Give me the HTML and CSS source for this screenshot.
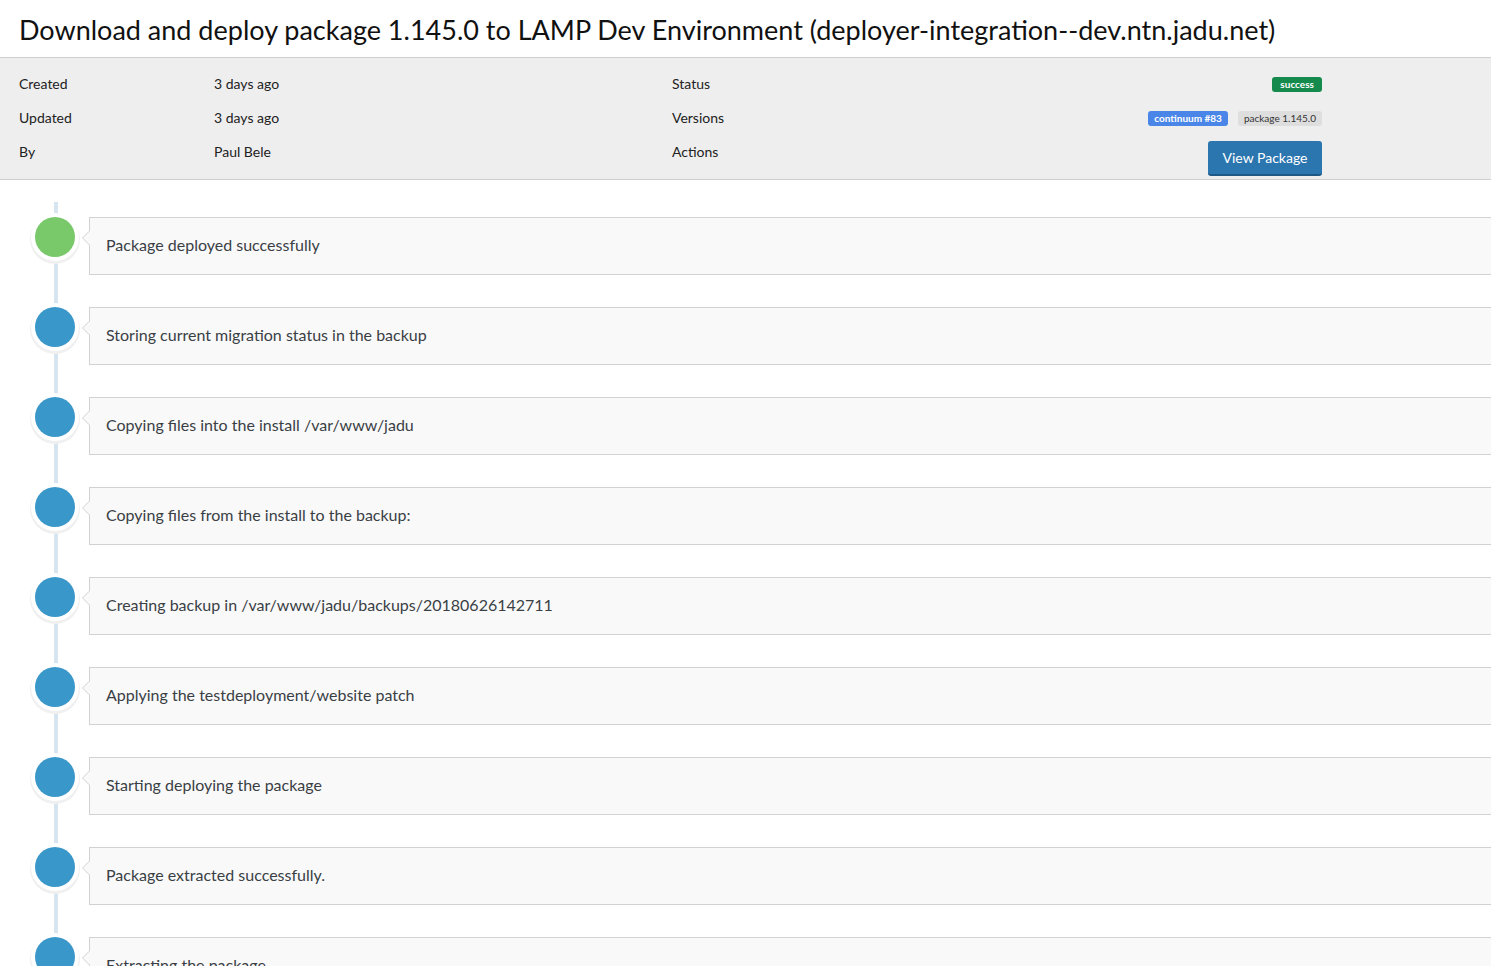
FILE: index.html
```html
<!DOCTYPE html>
<html>
<head>
<meta charset="utf-8">
<link rel="stylesheet" href="styles.css">
</head>
<body>
<header class="page-header">
  <h1 class="title">Download and deploy package 1.145.0 to LAMP Dev Environment (deployer-integration--dev.ntn.jadu.net)</h1>
</header>
<section class="meta">
  <div class="meta-row">
    <div class="meta-label">Created</div>
    <div class="meta-value">3 days ago</div>
    <div class="meta-label">Status</div>
    <div class="meta-right"><span class="badge badge-success">success</span></div>
  </div>
  <div class="meta-row">
    <div class="meta-label">Updated</div>
    <div class="meta-value">3 days ago</div>
    <div class="meta-label">Versions</div>
    <div class="meta-right"><span class="badge badge-blue">continuum #83</span><span class="badge badge-grey">package 1.145.0</span></div>
  </div>
  <div class="meta-row meta-row-last">
    <div class="meta-label">By</div>
    <div class="meta-value">Paul Bele</div>
    <div class="meta-label">Actions</div>
    <div class="meta-right"><a class="btn" href="#">View Package</a></div>
  </div>
</section>
<ol class="timeline">
  <li class="event"><span class="dot dot-green"></span><div class="card">Package deployed successfully</div></li>
  <li class="event"><span class="dot"></span><div class="card">Storing current migration status in the backup</div></li>
  <li class="event"><span class="dot"></span><div class="card">Copying files into the install /var/www/jadu</div></li>
  <li class="event"><span class="dot"></span><div class="card">Copying files from the install to the backup:</div></li>
  <li class="event"><span class="dot"></span><div class="card">Creating backup in /var/www/jadu/backups/20180626142711</div></li>
  <li class="event"><span class="dot"></span><div class="card">Applying the testdeployment/website patch</div></li>
  <li class="event"><span class="dot"></span><div class="card">Starting deploying the package</div></li>
  <li class="event"><span class="dot"></span><div class="card">Package extracted successfully.</div></li>
  <li class="event"><span class="dot"></span><div class="card">Extracting the package</div></li>
</ol>
</body>
</html>
```
FILE: styles.css
```css
html, body {
  margin: 0;
  padding: 0;
  overflow: hidden;
  background: #fff;
}
body {
  font-family: "Lato", "Open Sans", sans-serif;
  color: #222;
  width: 1491px;
  height: 966px;
}
.page-header {
  border-bottom: 1px solid #cfcfcf;
  padding: 14px 19px 12px;
}
.title {
  margin: 0;
  font-size: 27px;
  line-height: 31px;
  font-weight: 400;
  color: #111;
  white-space: nowrap;
}
.meta {
  background: #eee;
  border-bottom: 1px solid #cfcfcf;
  padding: 16px 169px 3px 19px;
  display: flex;
  flex-direction: column;
  gap: 14px;
}
.meta-row {
  display: grid;
  grid-template-columns: 195px 458px 1fr auto;
  align-items: center;
  height: 20px;
  font-size: 14px;
}
.meta-row-last {
  align-items: start;
  height: 34px;
}
.meta-label, .meta-value {
  line-height: 20px;
  color: #222;
}
.meta-right {
  display: flex;
  justify-content: flex-end;
  gap: 10px;
}
.badge {
  display: inline-block;
  font-size: 10px;
  font-weight: 700;
  line-height: 15px;
  height: 15px;
  padding: 0 6px;
  border-radius: 3px;
  color: #fff;
}
.badge-success { background: #148a4c; padding: 0 8px; }
.badge-blue { background: #4a86e8; padding: 0 6px; }
.badge-grey { background: #dedede; color: #333; font-weight: 400; padding: 0 6px; }
.btn {
  display: inline-block;
  box-sizing: border-box;
  height: 35px;
  width: 114px;
  margin-top: -1px;
  text-align: center;
  line-height: 33px;
  font-size: 14px;
  color: #fff;
  text-decoration: none;
  background: #2c76b0;
  border-radius: 3px;
  border-bottom: 2px solid #1d5884;
}
.timeline {
  list-style: none;
  margin: 22px 0 0;
  padding: 15px 0 0 35px;
  background: linear-gradient(#d7e5f0, #d7e5f0) no-repeat 54px 0 / 4px 100%;
}
.event {
  display: flex;
  align-items: flex-start;
  margin-bottom: 32px;
}
.dot {
  flex: none;
  width: 40px;
  height: 40px;
  border-radius: 50%;
  background: #3a97c9;
  box-shadow: 0 0 0 4px #fff, 0 2px 0 5px #f0f0f0;
}
.dot-green { background: #79c96b; }
.card {
  position: relative;
  flex: none;
  width: 1420px;
  margin-left: 14px;
  box-sizing: border-box;
  height: 58px;
  padding: 0 16px;
  line-height: 53px;
  font-size: 16px;
  color: #3a3f45;
  background: #f9f9f9;
  border: 1px solid #d2d2d2;
}
.card::before {
  content: "";
  position: absolute;
  left: -8px;
  top: 12px;
  border-style: solid;
  border-width: 8px 8px 8px 0;
  border-color: transparent #d2d2d2 transparent transparent;
}
.card::after {
  content: "";
  position: absolute;
  left: -7px;
  top: 12px;
  border-style: solid;
  border-width: 8px 8px 8px 0;
  border-color: transparent #f9f9f9 transparent transparent;
}
```
